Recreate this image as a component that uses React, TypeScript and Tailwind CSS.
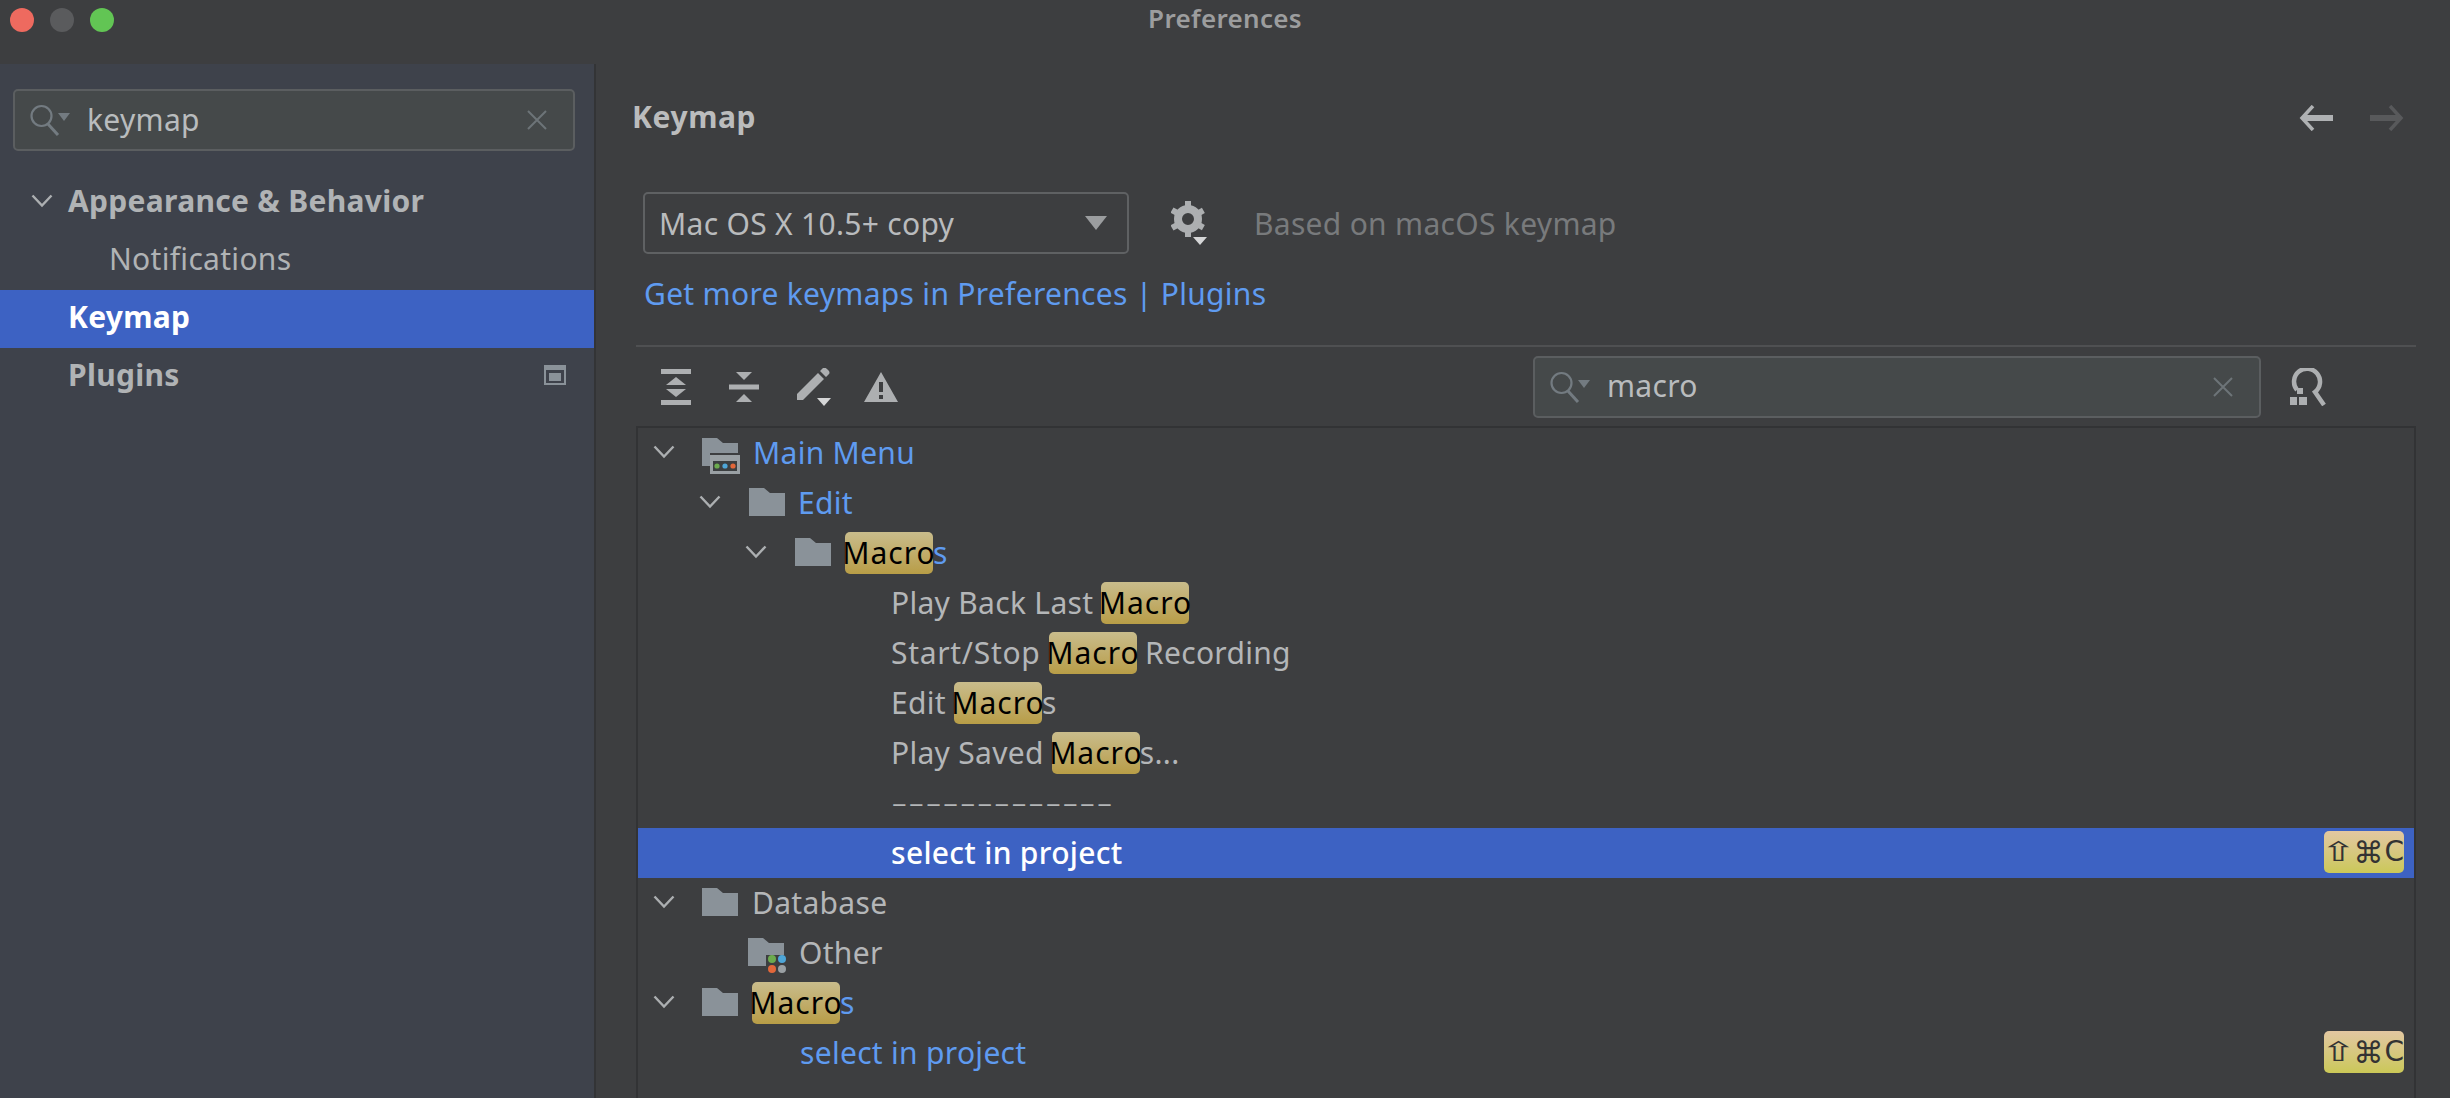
const muted = "text-[#b4b6b8]";
const link = "text-[#5f9bf0]";

function Chevron() {
  return (
    <svg width="22" height="14" viewBox="0 0 22 14" className="shrink-0">
      <path d="M1.5 1.5 L11 11.5 L20.5 1.5" fill="none" stroke="#acafb1" strokeWidth="2.4" />
    </svg>
  );
}

function Folder() {
  return (
    <svg width="36" height="28" viewBox="0 0 36 28" className="shrink-0">
      <path d="M0 0 H15 L21 5 H36 V28 H0 Z" fill="#8a9299" />
    </svg>
  );
}

function MenuFolder() {
  return (
    <svg width="38" height="36" viewBox="0 0 38 36" className="shrink-0">
      <path d="M0 0 H15 L21 5 H36 V15 H8 V28 H0 Z" fill="#8a9299" />
      <rect x="8" y="17" width="30" height="19" fill="#9aa0a4" />
      <rect x="11" y="23" width="24" height="10" fill="#3c3f41" />
      <circle cx="15" cy="28" r="2.6" fill="#6cab4e" />
      <circle cx="23" cy="28" r="2.6" fill="#4ea6d8" />
      <circle cx="31" cy="28" r="2.6" fill="#e2673a" />
    </svg>
  );
}

function OtherFolder() {
  return (
    <svg width="38" height="36" viewBox="0 0 38 36" className="shrink-0">
      <path d="M0 0 H15 L21 5 H36 V17 H18 V28 H0 Z" fill="#8a9299" />
      <circle cx="24" cy="21" r="4" fill="#6cab4e" />
      <circle cx="34" cy="21" r="4" fill="#4ea6d8" />
      <circle cx="24" cy="31" r="4" fill="#e2673a" />
      <circle cx="34" cy="31" r="4" fill="#9aa0a4" />
    </svg>
  );
}

function SearchField({ value, className }: { value: string; className: string }) {
  return (
    <div className={`flex h-[62px] items-center rounded-[5px] border-[2px] border-[#5b5e60] bg-[#45494a] pl-[15px] pr-[26px] ${className}`}>
      <svg width="42" height="32" viewBox="0 0 42 32" className="shrink-0">
        <circle cx="11.5" cy="12" r="10" fill="none" stroke="#737b81" strokeWidth="2.2" />
        <path d="M18 20 L28 31" stroke="#737b81" strokeWidth="3" />
        <path d="M28 9 H40 L34 17 Z" fill="#737b81" />
      </svg>
      <span className="ml-[15px] flex-1 pb-[2px] text-[30px] text-[#b9bcbe]">{value}</span>
      <svg width="20" height="20" viewBox="0 0 20 20" className="shrink-0">
        <path d="M1 1 L19 19 M19 1 L1 19" stroke="#6d7478" strokeWidth="2" />
      </svg>
    </div>
  );
}

function Highlight({ children }: { children: string }) {
  return (
    <span className="mt-[2px] inline-flex h-[42px] w-[88px] items-center justify-center rounded-[5px] bg-linear-to-b from-[#c9bc8b] to-[#b89d46] pb-[2px] tracking-[1px] text-black">
      {children}
    </span>
  );
}

function Shortcut() {
  return (
    <span className="ml-auto mr-[10px] flex h-[42px] w-[80px] items-center rounded-[5px] bg-linear-to-b from-[#e3c7a1] to-[#cbc857] font-['DejaVu_Sans',sans-serif] tracking-normal text-[#333333]">
      <span className="ml-[3px] inline-block w-[24px] scale-x-[1.6] text-center text-[27px]">⇧</span>
      <span className="ml-[3px] text-[30px]">⌘</span>
      <span className="ml-[1px] text-[28px]">C</span>
    </span>
  );
}

function Row({ className = "", children }: { className?: string; children: React.ReactNode }) {
  return <div className={`flex h-[50px] items-center pb-[2px] text-[30px] ${className}`}>{children}</div>;
}

export default function App() {
  return (
    <div className="flex h-[1098px] w-[2450px] flex-col overflow-hidden bg-[#3d3e40] font-['Noto_Sans',sans-serif] tracking-[0.3px]">
      {/* title bar */}
      <div className="relative flex h-[64px] shrink-0 items-start pl-[10px] pt-[8px]">
        <div className="flex gap-[16px]">
          <div className="size-[24px] rounded-full bg-[#ee6a5f]" />
          <div className="size-[24px] rounded-full bg-[#5a5b5d]" />
          <div className="size-[24px] rounded-full bg-[#62c554]" />
        </div>
        <div className="absolute inset-x-0 top-[-1px] text-center text-[26px] font-semibold text-[#9c9d9e]">Preferences</div>
      </div>

      <div className="flex flex-1">
        {/* sidebar */}
        <div className="w-[596px] shrink-0 border-r-[2px] border-[#333436] bg-[#3e424b] pt-[25px]">
          <SearchField value="keymap" className="ml-[13px] w-[562px]" />
          <div className="mt-[23px] flex h-[58px] items-center pb-[5px] pl-[31px] text-[30px] font-bold text-[#b0b3b5]">
            <Chevron />
            <span className="ml-[15px]">Appearance &amp; Behavior</span>
          </div>
          <div className="flex h-[58px] items-center pb-[5px] pl-[109px] text-[30px] text-[#b0b3b5]">Notifications</div>
          <div className="flex h-[58px] items-center bg-[#3d62c3] pb-[5px] pl-[68px] text-[30px] font-bold text-white">Keymap</div>
          <div className="flex h-[58px] items-center justify-between pb-[5px] pl-[68px] pr-[28px] text-[30px] font-bold text-[#b0b3b5]">
            Plugins
            <svg width="22" height="20" viewBox="0 0 22 20">
              <rect x="1" y="1" width="20" height="18" fill="none" stroke="#8a9299" strokeWidth="2" />
              <rect x="1" y="1" width="20" height="4" fill="#8a9299" />
              <rect x="5" y="8" width="12" height="8" fill="#8a9299" />
            </svg>
          </div>
        </div>

        {/* main */}
        <div className="flex min-w-0 flex-1 flex-col">
          <div className="flex h-[108px] shrink-0 items-center justify-between pl-[36px] pr-[46px]">
            <span className="pb-[3px] text-[30px] font-bold tracking-[0.6px] text-[#bbbcbd]">Keymap</span>
            <div className="flex gap-[37px]">
              <svg width="34" height="26" viewBox="0 0 34 26">
                <path d="M14 1 L3 13 L14 25" fill="none" stroke="#afb1b3" strokeWidth="3.5" />
                <path d="M4 13 H34" stroke="#afb1b3" strokeWidth="6" />
              </svg>
              <svg width="34" height="26" viewBox="0 0 34 26">
                <path d="M20 1 L31 13 L20 25" fill="none" stroke="#58595b" strokeWidth="3.5" />
                <path d="M30 13 H0" stroke="#58595b" strokeWidth="6" />
              </svg>
            </div>
          </div>

          <div className="ml-[47px] mt-[20px] flex h-[62px] shrink-0 items-center">
            <div className="flex h-[62px] w-[486px] items-center justify-between rounded-[5px] border-[2px] border-[#5f6163] pl-[14px] pr-[20px] text-[30px] text-[#b9bbbd]">
              Mac OS X 10.5+ copy
              <svg width="22" height="14" viewBox="0 0 22 14">
                <path d="M0 0 H22 L11 14 Z" fill="#9b9d9f" />
              </svg>
            </div>
            <svg width="40" height="46" viewBox="0 0 40 46" className="ml-[42px]">
              <circle cx="17" cy="19" r="10" fill="none" stroke="#adafb1" strokeWidth="8" />
              <path d="M17 1 V37 M1 10 L33 28 M1 28 L33 10" stroke="#adafb1" strokeWidth="6" strokeDasharray="7 22" />
              <path d="M22 37 H36 L29 45 Z" fill="#d5d6d7" />
            </svg>
            <span className="ml-[43px] text-[30px] text-[#787a7c]">Based on macOS keymap</span>
          </div>

          <div className={`ml-[48px] flex h-[79px] shrink-0 items-center text-[30px] ${link}`}>
            Get more keymaps in Preferences | Plugins
          </div>

          <div className="ml-[40px] mr-[34px] mt-[12px] h-[2px] shrink-0 bg-[#4f5052]" />

          <div className="ml-[65px] mr-[121px] flex h-[79px] shrink-0 items-center">
            <svg width="30" height="36" viewBox="0 0 30 36" fill="#adafb1">
              <rect width="30" height="5" />
              <rect y="31" width="30" height="5" />
              <path d="M15 8 L25 16 H5 Z M15 28 L25 20 H5 Z" />
            </svg>
            <svg width="30" height="30" viewBox="0 0 30 30" fill="#adafb1" className="ml-[38px]">
              <path d="M7 0 H23 L15 8 Z M7 30 H23 L15 22 Z" />
              <rect y="12.5" width="30" height="5" />
            </svg>
            <svg width="34" height="38" viewBox="0 0 34 38" className="ml-[38px]">
              <path d="M0 26 L21 5 L27 11 L6 32 H0 Z M23 3 L26 0 Q28 -1 30 1 L32 3 Q33 5 32 6 L29 9 Z" fill="#adafb1" />
              <path d="M20 30 H34 L27 38 Z" fill="#d5d6d7" />
            </svg>
            <svg width="34" height="30" viewBox="0 0 34 30" className="ml-[33px]">
              <path fillRule="evenodd" d="M17 0 L34 30 H0 Z M15 10 V20 H19 V10 Z M15 23 V27 H19 V23 Z" fill="#adafb1" />
            </svg>
            <SearchField value="macro" className="ml-auto w-[728px]" />
            <svg width="40" height="38" viewBox="0 0 40 38" fill="none" className="ml-[28px]">
              <path d="M8 22 A13 13 0 1 1 26 24 L35 37" stroke="#adafb1" strokeWidth="4.5" />
              <rect x="8" y="20" width="6" height="6" fill="#adafb1" />
              <rect x="1" y="29" width="7" height="8" fill="#adafb1" />
              <rect x="10" y="29" width="8" height="8" fill="#adafb1" />
            </svg>
          </div>

          {/* keymap tree */}
          <div className="ml-[40px] mr-[34px] flex-1 border-x-[2px] border-t-[2px] border-[#323335]">
            <Row className={`pl-[15px] ${link}`}>
              <Chevron />
              <span className="ml-[27px] mt-[7px]"><MenuFolder /></span>
              <span className="ml-[13px]">Main Menu</span>
            </Row>
            <Row className={`pl-[61px] ${link}`}>
              <Chevron />
              <span className="ml-[28px]"><Folder /></span>
              <span className="ml-[13px]">Edit</span>
            </Row>
            <Row className={`pl-[107px] ${link}`}>
              <Chevron />
              <span className="ml-[28px]"><Folder /></span>
              <span className="ml-[14px] flex items-center"><Highlight>Macro</Highlight><span>s</span></span>
            </Row>
            <Row className={`pl-[253px] ${muted}`}>
              Play Back Last&nbsp;<Highlight>Macro</Highlight>
            </Row>
            <Row className={`pl-[253px] ${muted}`}>
              <span className="tracking-[0.7px]">Start/Stop&nbsp;</span><Highlight>Macro</Highlight>&nbsp;Recording
            </Row>
            <Row className={`pl-[253px] ${muted}`}>
              Edit&nbsp;<Highlight>Macro</Highlight>s
            </Row>
            <Row className={`pl-[253px] ${muted}`}>
              Play Saved&nbsp;<Highlight>Macro</Highlight>s...
            </Row>
            <Row className={`pl-[253px] ${muted}`}>
              <span className="font-['DejaVu_Sans',sans-serif] text-[46px] font-extralight leading-none tracking-[0.5px]">-------------</span>
            </Row>
            <Row className="bg-[#3d62c3] pl-[253px] font-medium text-white">
              select in project
              <Shortcut />
            </Row>
            <Row className={`pl-[15px] ${muted}`}>
              <Chevron />
              <span className="ml-[27px]"><Folder /></span>
              <span className="ml-[14px]">Database</span>
            </Row>
            <Row className={`pl-[110px] ${muted}`}>
              <span className="mt-[8px]"><OtherFolder /></span>
              <span className="ml-[13px]">Other</span>
            </Row>
            <Row className={`pl-[15px] ${link}`}>
              <Chevron />
              <span className="ml-[27px]"><Folder /></span>
              <span className="ml-[14px] flex items-center"><Highlight>Macro</Highlight><span>s</span></span>
            </Row>
            <Row className={`pl-[162px] ${link}`}>
              select in project
              <Shortcut />
            </Row>
          </div>
        </div>
      </div>
    </div>
  );
}
